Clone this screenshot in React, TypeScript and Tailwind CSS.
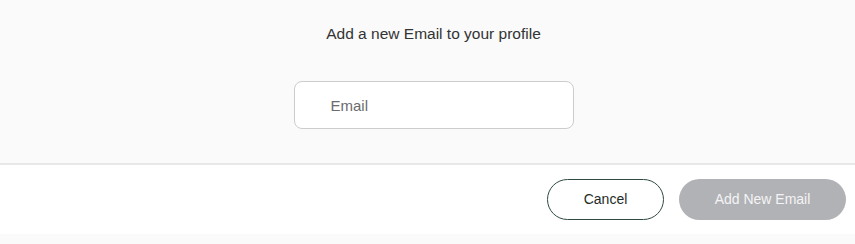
export default function App() {
  return (
    <div className="h-[244px] w-full bg-[#fafafa] font-['Helvetica','Liberation_Sans',Arial,sans-serif]">
      <div className="flex h-[165px] flex-col items-center border-b-2 border-[#e8e8e8] bg-[#fafafa] pl-[12px]">
        <h2 className="mt-[24px] text-[15.5px] leading-[20px] text-[#333333]">Add a new Email to your profile</h2>
        <input
          type="text"
          placeholder="Email"
          className="mt-[37px] h-[48px] w-[280px] rounded-[8px] border border-[#cccccc] bg-white pl-[36px] text-[15px] text-[#333] outline-none placeholder:text-[#6b6b6b]"
        />
      </div>
      <div className="flex h-[69px] items-center justify-end gap-[15px] bg-white pr-[9px]">
        <button className="h-[41px] w-[117px] rounded-full border border-[#2f4a3e] bg-white text-[14px] text-[#1e2b26]">
          Cancel
        </button>
        <button className="h-[41px] w-[167px] rounded-full bg-[#b1b2b5] text-[14px] text-[#f4f4f5]">
          Add New Email
        </button>
      </div>
    </div>
  );
}
